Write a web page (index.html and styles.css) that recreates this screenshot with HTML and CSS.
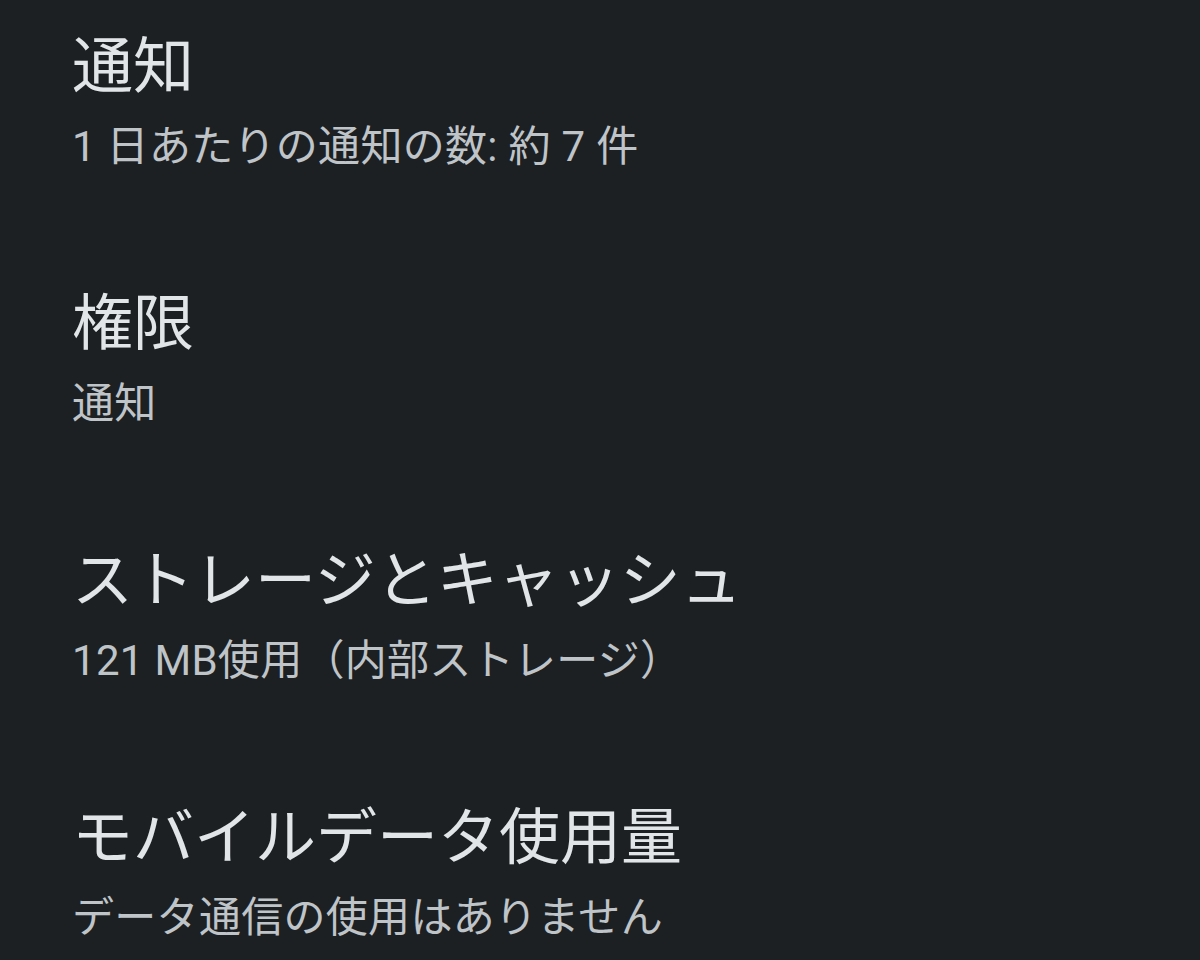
FILE: index.html
```html
<!DOCTYPE html>
<html lang="ja">
<head>
<meta charset="utf-8">
<link rel="stylesheet" href="styles.css">
</head>
<body>
<div class="list">
  <div class="item">
    <div class="title">通知</div>
    <div class="summary">1 日あたりの通知の数: 約 7 件</div>
  </div>
  <div class="item">
    <div class="title">権限</div>
    <div class="summary">通知</div>
  </div>
  <div class="item">
    <div class="title">ストレージとキャッシュ</div>
    <div class="summary">121 MB使用（内部ストレージ）</div>
  </div>
  <div class="item">
    <div class="title">モバイルデータ使用量</div>
    <div class="summary">データ通信の使用はありません</div>
  </div>
</div>
</body>
</html>
```

FILE: styles.css
```css
html, body {
  margin: 0;
  padding: 0;
  background: #1d2023;
  height: 100%;
  overflow: hidden;
}
body {
  font-family: Roboto, "Noto Sans CJK JP", sans-serif;
}
.list {
  display: flex;
  flex-direction: column;
  padding: 27px 0 0 72px;
  gap: 109px;
}
.item {
  display: flex;
  flex-direction: column;
  gap: 12px;
}
.title {
  font-size: 61px;
  line-height: 80px;
  color: #e2e5e8;
  white-space: nowrap;
}
.summary {
  font-size: 42px;
  line-height: 56px;
  color: #bfc4c8;
  letter-spacing: 0.3px;
  white-space: nowrap;
}
```
